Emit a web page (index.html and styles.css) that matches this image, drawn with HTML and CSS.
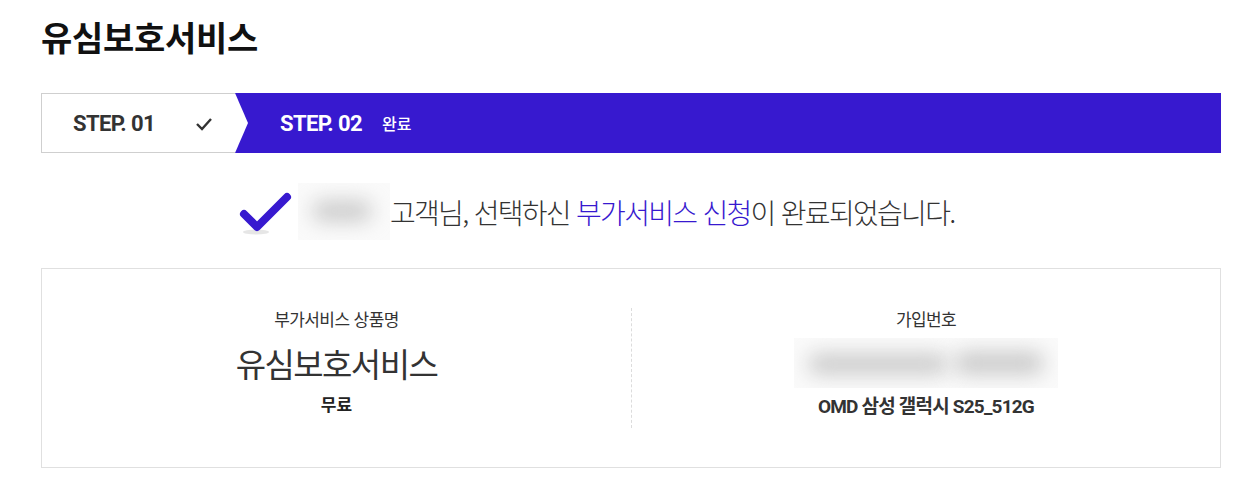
FILE: index.html
```html
<!DOCTYPE html>
<html lang="ko">
<head>
<meta charset="utf-8">
<title>유심보호서비스</title>
<link rel="stylesheet" href="styles.css">
</head>
<body>
<div class="page">
  <h1 class="title">유심보호서비스</h1>

  <div class="steps">
    <div class="step step-done">
      <span class="step-num">STEP. 01</span>
      <svg class="step-check" width="18" height="14" viewBox="0 0 18 14"><path d="M2 7 L7 12 L16 2" fill="none" stroke="#333" stroke-width="2.4"/></svg>
    </div>
    <div class="step step-active">
      <span class="step-num">STEP. 02</span>
      <span class="step-label">완료</span>
    </div>
  </div>

  <div class="message">
    <svg class="msg-check" width="56" height="46" viewBox="0 0 56 46">
      <ellipse cx="18" cy="42" rx="13" ry="2.5" fill="#e6e6e6"/>
      <path d="M6 24 L19 37 L49 7" fill="none" stroke="#3719cf" stroke-width="8" stroke-linecap="round" stroke-linejoin="round"/>
    </svg>
    <div class="blur-name"><span class="blob"></span></div>
    <p class="msg-text">고객님, 선택하신 <em>부가서비스 신청</em>이 완료되었습니다.</p>
  </div>

  <div class="info">
    <div class="info-col">
      <div class="info-label">부가서비스 상품명</div>
      <div class="info-big">유심보호서비스</div>
      <div class="info-sub">무료</div>
    </div>
    <div class="info-col info-col-right">
      <div class="info-label">가입번호</div>
      <div class="blur-number"><span class="blob b1"></span><span class="blob b2"></span></div>
      <div class="info-sub info-device">OMD 삼성 갤럭시 S25_512G</div>
    </div>
  </div>
</div>
</body>
</html>
```
FILE: styles.css
```css
* { box-sizing: border-box; }
html, body { margin: 0; padding: 0; background: #fff; }
body {
  font-family: "Noto Sans CJK KR", "Noto Sans", sans-serif;
  color: #222;
}
.page {
  width: 1180px;
  margin-left: 41px;
  padding-top: 13px;
}
.title {
  margin: 0;
  font-size: 34px;
  font-weight: 700;
  line-height: 48px;
  letter-spacing: -0.3px;
  color: #111;
}
.steps {
  display: flex;
  height: 60px;
  margin-top: 32px;
}
.step {
  display: flex;
  align-items: center;
  height: 60px;
}
.step-done {
  position: relative;
  width: 194px;
  border: 1px solid #cfcfcf;
  border-right: none;
  background: #fff;
  padding-left: 31px;
  z-index: 1;
}
.step-done::after {
  content: "";
  position: absolute;
  top: -1px;
  right: -13px;
  width: 13px;
  height: 60px;
  background: #fff;
  clip-path: polygon(0 0, 100% 50%, 0 100%);
}
.step-num {
  font-family: Roboto, "Liberation Sans", sans-serif;
  font-weight: 700;
  font-size: 22px;
  letter-spacing: -0.6px;
}
.step-done .step-num { color: #333; }
.step-check { margin-left: 40px; margin-top: 2px; }
.step-active {
  flex: 1;
  background: #3719cf;
  padding-left: 45px;
  color: #fff;
}
.step-label {
  margin-left: 20px;
  font-size: 16px;
  font-weight: 500;
}
.message {
  display: flex;
  align-items: center;
  padding-left: 197px;
  margin-top: 30px;
  height: 57px;
}
.msg-check { margin-top: 2px; }
.blur-name {
  position: relative;
  width: 92px;
  height: 57px;
  margin-left: 4px;
  overflow: hidden;
  background: #fafafa;
}
.blob {
  position: absolute;
  display: block;
  background: #c9c9c9;
  border-radius: 20px;
  filter: blur(10px);
}
.blur-name .blob { left: 14px; top: 18px; width: 60px; height: 20px; }
.msg-text {
  margin: 0;
  font-size: 28px;
  font-weight: 300;
  letter-spacing: -1.7px;
  color: #333;
  line-height: 40px;
}
.msg-text em {
  font-style: normal;
  color: #3719cf;
}
.info {
  display: grid;
  grid-template-columns: 1fr 1fr;
  margin-top: 28px;
  border: 1px solid #e0e0e0;
  padding: 39px 0 39px;
}
.info-col {
  display: flex;
  flex-direction: column;
  align-items: center;
  height: 120px;
}
.info-col-right { border-left: 1px dashed #dcdcdc; }
.info-label {
  font-size: 17px;
  line-height: 22px;
  color: #333;
  letter-spacing: -0.6px;
}
.info-big {
  margin-top: 11px;
  font-size: 33px;
  line-height: 44px;
  letter-spacing: -1.6px;
  color: #333;
  font-weight: 400;
}
.info-sub {
  margin-top: 8px;
  font-size: 17px;
  font-weight: 700;
  line-height: 22px;
  color: #222;
}
.blur-number {
  position: relative;
  width: 264px;
  height: 50px;
  margin-top: 8px;
  overflow: hidden;
  background: #fafafa;
}
.blur-number .b1 { left: 14px; top: 16px; width: 140px; height: 20px; }
.blur-number .b2 { left: 160px; top: 14px; width: 90px; height: 22px; }
.info-device {
  margin-top: 8px;
  font-family: Roboto, "Noto Sans CJK KR", sans-serif;
  font-size: 19px;
  letter-spacing: -0.8px;
  color: #333;
}
```
